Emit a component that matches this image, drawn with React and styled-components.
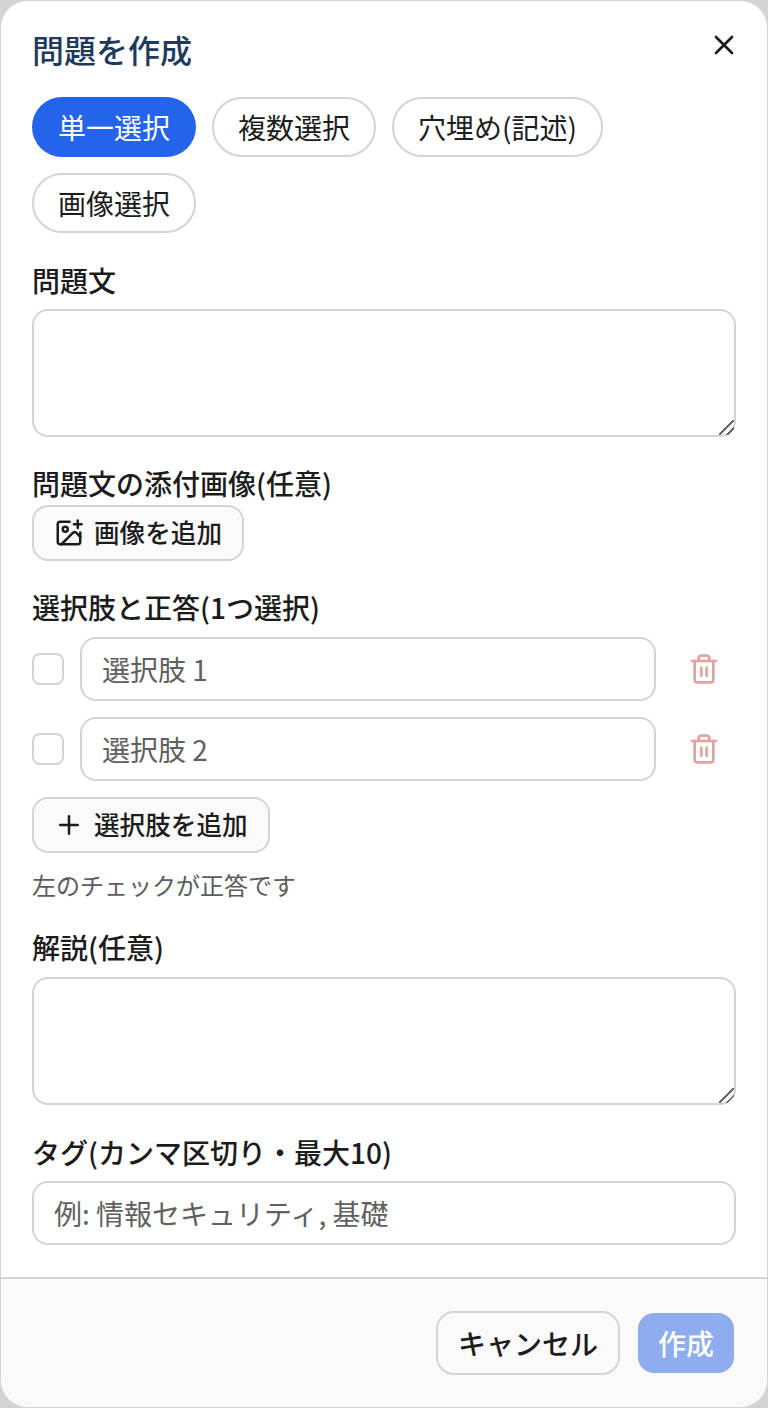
import React from 'react';
import styled, { createGlobalStyle } from 'styled-components';
import { X, ImagePlus, Plus, Trash2 } from 'lucide-react';

const GlobalStyle = createGlobalStyle`
  html, body { margin: 0; padding: 0; background: #d4d4d4; }
  * { box-sizing: border-box; }
  body, input, textarea, button {
    font-family: "Noto Sans CJK JP", "Noto Sans", sans-serif;
  }
`;

const Modal = styled.div`
  width: 768px;
  height: 1408px;
  display: flex;
  flex-direction: column;
  background: #fff;
  border: 1px solid #d4d4d4;
  border-radius: 28px;
  overflow: hidden;
  color: #1c1c1c;
`;

const Body = styled.div`
  flex: 1;
  padding: 31px 31px 0;
`;

const Header = styled.div`
  display: flex;
  justify-content: space-between;
  align-items: flex-start;
  height: 40px;
  margin-bottom: 25px;
`;

const Title = styled.h2`
  margin: 0;
  font-size: 32px;
  line-height: 34px;
  font-weight: 500;
  color: #1e3a5f;
`;

const CloseButton = styled.button`
  display: flex;
  padding: 0;
  margin-right: -4px;
  margin-top: -3px;
  border: 0;
  background: none;
  color: #1c1c1c;
`;

const Chips = styled.div`
  display: flex;
  flex-wrap: wrap;
  gap: 16px;
  width: 600px;
  margin-bottom: 28px;
`;

const Chip = styled.button`
  height: 60px;
  border-radius: 30px;
  font-size: 28px;
  border: ${(p) => (p.$active ? '0' : '2px solid #d4d4d4')};
  padding: ${(p) => (p.$active ? '0 26px' : '0 24px')};
  background: ${(p) => (p.$active ? '#2563eb' : '#fff')};
  color: ${(p) => (p.$active ? '#fff' : '#1c1c1c')};
`;

const Label = styled.div`
  font-size: 28px;
  line-height: 38px;
  font-weight: 500;
  margin-bottom: ${(p) => p.$gap ?? 10}px;
`;

const TextArea = styled.textarea`
  display: block;
  width: 704px;
  height: 128px;
  border: 2px solid #d4d4d4;
  border-radius: 16px;
  background: #fff;
  resize: vertical;
  outline: none;
  margin-bottom: ${(p) => p.$gap}px;
  &::-webkit-resizer {
    background: linear-gradient(
      135deg,
      transparent 46%,
      #6b6b6b 46%,
      #6b6b6b 54%,
      transparent 54%,
      transparent 72%,
      #6b6b6b 72%,
      #6b6b6b 80%,
      transparent 80%
    );
  }
`;

const ToolButton = styled.button`
  display: flex;
  align-items: center;
  gap: 10px;
  height: 56px;
  padding: 0 20px;
  border: 2px solid #d4d4d4;
  border-radius: 16px;
  background: #fafafa;
  color: #1c1c1c;
  font-size: 25.6px;
  font-weight: 500;
  margin-bottom: ${(p) => p.$gap}px;
`;

const ToolLabel = styled.span`
  margin-bottom: 4px;
`;

const OptionRow = styled.div`
  display: flex;
  align-items: center;
  gap: 16px;
  margin-bottom: 16px;
`;

const CheckBox = styled.span`
  width: 32px;
  height: 32px;
  flex: none;
  border: 2px solid #d4d4d4;
  border-radius: 8px;
  background: #fff;
`;

const TextInput = styled.input`
  display: block;
  width: ${(p) => p.$width}px;
  height: 64px;
  padding: 0 ${(p) => p.$pad}px;
  border: 2px solid #d4d4d4;
  border-radius: 16px;
  background: #fff;
  color: #1c1c1c;
  font-size: 28px;
  outline: none;
  &::placeholder { color: #606060; opacity: 1; }
`;

const DeleteButton = styled.button`
  display: flex;
  padding: 0;
  margin-left: 16px;
  border: 0;
  background: none;
  color: #e0a3a3;
`;

const Hint = styled.div`
  font-size: 24px;
  line-height: 36px;
  color: #5c5c5c;
  margin-bottom: 25px;
`;

const Footer = styled.div`
  height: 130px;
  display: flex;
  justify-content: flex-end;
  align-items: center;
  gap: 18px;
  padding: 0 33px 0 0;
  border-top: 2px solid #d4d4d4;
  background: #fafafa;
`;

const CancelButton = styled.button`
  width: 184px;
  height: 64px;
  padding: 0;
  border: 2px solid #d4d4d4;
  border-radius: 18px;
  background: #fafafa;
  color: #1c1c1c;
  font-size: 28px;
  font-weight: 500;
`;

const SubmitButton = styled.button`
  width: 96px;
  height: 60px;
  padding: 0;
  border: 0;
  border-radius: 16px;
  background: #8fadee;
  color: #fff;
  font-size: 28px;
  font-weight: 500;
`;

const types = ['単一選択', '複数選択', '穴埋め(記述)', '画像選択'];
const options = ['選択肢 1', '選択肢 2'];

export default function App() {
  return (
    <>
      <GlobalStyle />
      <Modal>
        <Body>
          <Header>
            <Title>問題を作成</Title>
            <CloseButton aria-label="閉じる">
              <X size={32} strokeWidth={2} />
            </CloseButton>
          </Header>

          <Chips>
            {types.map((t, i) => (
              <Chip key={t} $active={i === 0}>{t}</Chip>
            ))}
          </Chips>

          <Label>問題文</Label>
          <TextArea $gap={27} />

          <Label $gap={3}>問題文の添付画像(任意)</Label>
          <ToolButton $gap={27}>
            <ImagePlus size={30} strokeWidth={2} />
            <ToolLabel>画像を追加</ToolLabel>
          </ToolButton>

          <Label $gap={11}>選択肢と正答(1つ選択)</Label>
          {options.map((o) => (
            <OptionRow key={o}>
              <CheckBox />
              <TextInput $width={576} $pad={20} placeholder={o} />
              <DeleteButton aria-label="削除">
                <Trash2 size={32} strokeWidth={2} />
              </DeleteButton>
            </OptionRow>
          ))}
          <ToolButton $gap={14}>
            <Plus size={30} strokeWidth={2} />
            <ToolLabel>選択肢を追加</ToolLabel>
          </ToolButton>
          <Hint>左のチェックが正答です</Hint>

          <Label $gap={11}>解説(任意)</Label>
          <TextArea $gap={28} />

          <Label>タグ(カンマ区切り・最大10)</Label>
          <TextInput $width={704} $pad={20} placeholder="例: 情報セキュリティ, 基礎" />
        </Body>
        <Footer>
          <CancelButton>キャンセル</CancelButton>
          <SubmitButton>作成</SubmitButton>
        </Footer>
      </Modal>
    </>
  );
}
